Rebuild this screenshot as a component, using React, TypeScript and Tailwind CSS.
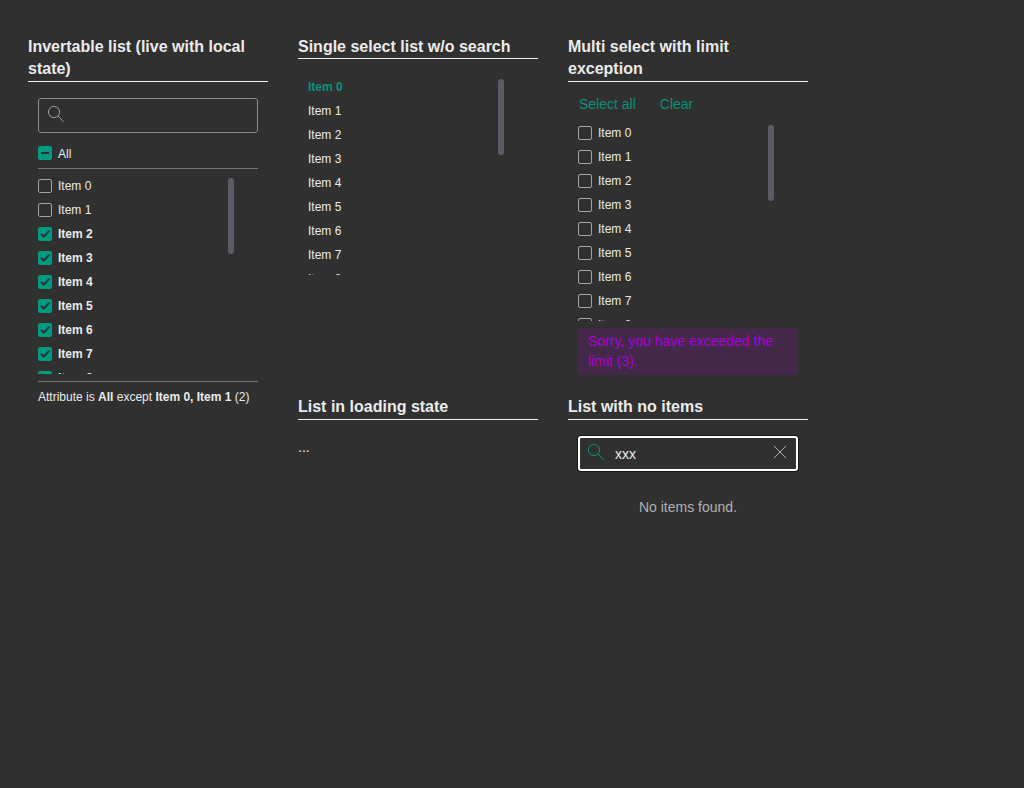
import type { ReactNode } from "react";

const ITEMS = Array.from({ length: 9 }, (_, i) => `Item ${i}`);

function Heading({ children, size }: { children: ReactNode; size: string }) {
  return (
    <h4 className={`shrink-0 border-b border-[#f0f0f0] text-base font-bold leading-[22.4px] ${size}`}>
      {children}
    </h4>
  );
}

function Checkbox({ state }: { state: "off" | "on" | "mixed" }) {
  if (state === "off") {
    return <span className="size-[14px] shrink-0 rounded-xs border border-[#a3a3a3]" />;
  }
  return (
    <span className="flex size-[14px] shrink-0 items-center justify-center rounded-xs bg-[#009b81]">
      {state === "mixed" ? (
        <span className="h-0.5 w-2 bg-[#303030]" />
      ) : (
        <svg viewBox="0 0 14 14" className="size-[14px]" fill="none" stroke="#303030" strokeWidth="2">
          <path d="M2.8 6.7 5.8 9.6 11.3 3.9" />
        </svg>
      )}
    </span>
  );
}

function SearchIcon({ className }: { className: string }) {
  return (
    <svg viewBox="0 0 18 18" className={`size-[18px] shrink-0 ${className}`} fill="none" stroke="currentColor">
      <circle cx="7" cy="7" r="5.6" />
      <path d="M11 11 16.6 16.6" />
    </svg>
  );
}

function List({ kind }: { kind: "inverted" | "single" | "multi" }) {
  return (
    <div className="flex h-[200px] shrink-0 overflow-hidden text-xs">
      <ul className="w-[190px]">
        {ITEMS.map((item, i) => {
          const selected = (kind === "inverted" && i > 1) || (kind === "single" && i === 0);
          return (
            <li
              key={item}
              className={`flex h-6 items-center gap-1.5 ${selected ? "font-bold" : ""} ${
                kind === "single" && selected ? "text-[#0b937b]" : ""
              }`}
            >
              {kind !== "single" && <Checkbox state={selected ? "on" : "off"} />}
              <span>{item}</span>
            </li>
          );
        })}
      </ul>
      <div className="mt-1 h-[76px] w-1.5 rounded-[3px] bg-[#5a5d63]" />
    </div>
  );
}

export default function App() {
  return (
    <main className="grid h-[788px] grid-cols-[240px_240px_240px] grid-rows-[360px_1fr] gap-x-[30px] bg-[#303030] pl-7 pt-9 font-['Liberation_Sans',Arial,sans-serif] text-sm text-[#ebebeb]">
      <section className="flex flex-col">
        <Heading size="h-[46px]">Invertable list (live with local state)</Heading>
        <div className="flex flex-col px-2.5 pt-4">
          <div className="h-[35px] rounded-[3px] border border-[#8c8c8c] pl-2 pt-1.5">
            <SearchIcon className="text-[#9b9b9b]" />
          </div>
          <div className="mb-[5px] flex h-9 shrink-0 items-start gap-1.5 border-b border-[#737373] pt-[13px] text-xs leading-4">
            <Checkbox state="mixed" />
            <span>All</span>
          </div>
          <List kind="inverted" />
          <p className="mt-[7px] whitespace-nowrap border-t border-[#737373] pt-1.5 text-xs leading-[18px]">
            Attribute is <b>All</b> except <b>Item 0, Item 1</b> (2)
          </p>
        </div>
      </section>

      <section className="flex flex-col">
        <Heading size="h-[23px]">Single select list w/o search</Heading>
        <div className="px-2.5 pt-4">
          <List kind="single" />
        </div>
      </section>

      <section className="flex flex-col">
        <Heading size="h-[46px]">Multi select with limit exception</Heading>
        <div className="flex flex-col px-2.5">
          <div className="flex h-[39px] gap-6 pl-px pt-3 leading-5 text-[#0b937b]">
            <button className="h-5">Select all</button>
            <button className="h-5">Clear</button>
          </div>
          <List kind="multi" />
          <p className="mt-[7px] h-[47px] rounded-[3px] bg-[#442849] px-2.5 pt-[3px] leading-5 text-[#ab00d8]">
            Sorry, you have exceeded the limit (3).
          </p>
        </div>
      </section>

      <section className="col-start-2">
        <Heading size="h-6">List in loading state</Heading>
        <p className="pt-[17px] leading-5">...</p>
      </section>

      <section>
        <Heading size="h-6">List with no items</Heading>
        <div className="px-2.5 pt-4">
          <div className="flex h-[35px] justify-between rounded-[3px] border-2 border-white pl-[7px] pr-2 pt-[5px] shadow-[0_0_0_1px_#141414]">
            <div className="flex gap-2.5">
              <SearchIcon className="text-[#0b937b]" />
              <span className="pt-px leading-5">xxx</span>
            </div>
            <svg viewBox="0 0 16 16" className="mt-px size-4" fill="none" stroke="#b0b0b0">
              <path d="m2 2 12 12M14 2 2 14" />
            </svg>
          </div>
          <p className="pt-[26px] text-center leading-5 text-[#b0b0b0]">No items found.</p>
        </div>
      </section>
    </main>
  );
}
